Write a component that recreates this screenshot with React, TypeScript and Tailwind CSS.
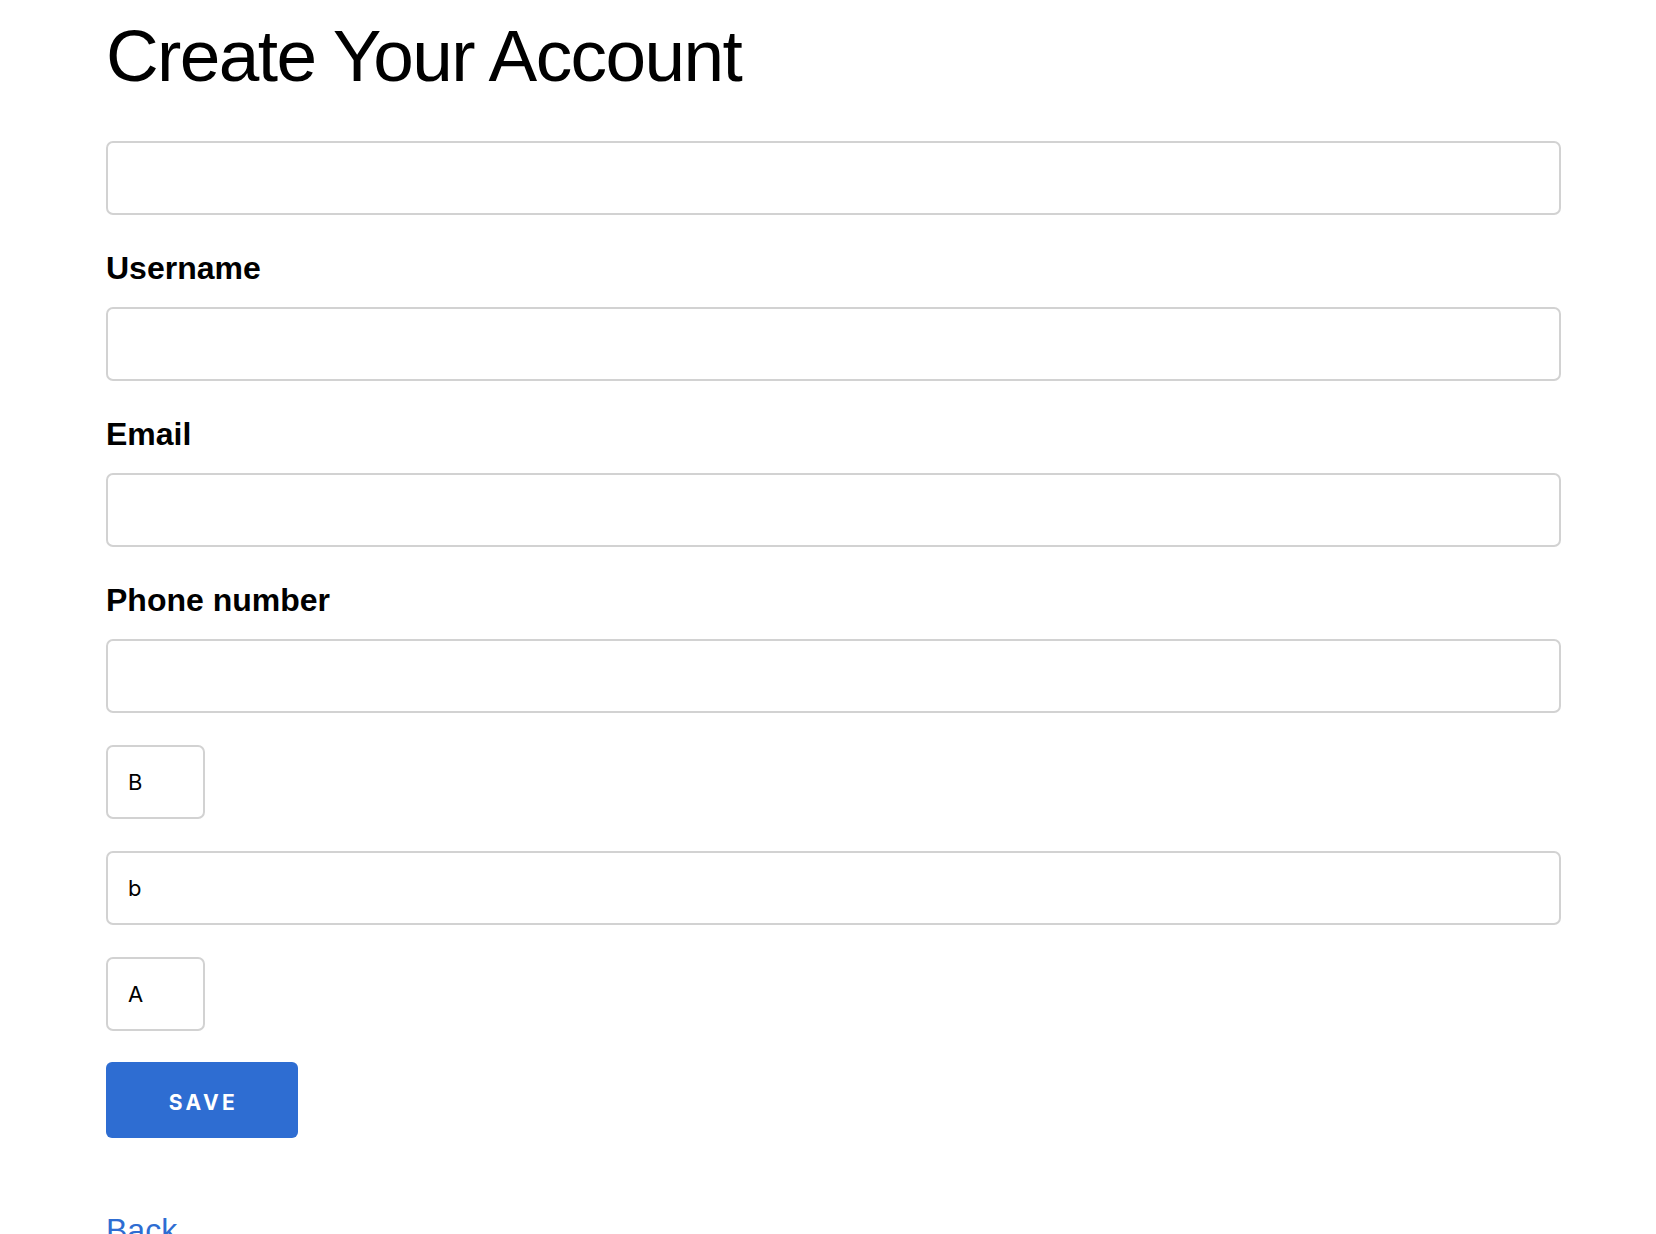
const inputBase =
  "h-[74px] rounded-[7px] border-2 border-[#d2d2d2] bg-white pl-[20px] text-[22px] text-black outline-none font-['Inter',sans-serif]";

function Field({ label, first }: { label?: string; first?: boolean }) {
  return (
    <div className={first ? "mt-[49px]" : ""}>
      {label && (
        <label className="mt-[33px] mb-[19px] block text-[32px] leading-[40px] font-bold text-black">
          {label}
        </label>
      )}
      <input type="text" className={`${inputBase} w-full`} />
    </div>
  );
}

export default function App() {
  return (
    <div className="min-h-screen bg-white font-['Liberation_Sans',Arial,sans-serif]">
      <div className="ml-[106px] w-[1455px] pt-[19px]">
        <h1 className="text-[73px] leading-none font-normal tracking-[-1.6px] text-black">
          Create Your Account
        </h1>

        <form onSubmit={(e) => e.preventDefault()}>
          <Field first />
          <Field label="Username" />
          <Field label="Email" />
          <Field label="Phone number" />

          <div className="mt-[32px] flex flex-col gap-[32px]">
            <input type="text" defaultValue="B" className={`${inputBase} w-[99px]`} />
            <input type="text" defaultValue="b" className={`${inputBase} w-full`} />
            <input type="text" defaultValue="A" className={`${inputBase} w-[99px]`} />
          </div>

          <button
            type="submit"
            className="mt-[31px] h-[76px] w-[192px] rounded-[6px] bg-[#2e6dd2] pt-[6px] pl-[3px] text-[21px] font-bold tracking-[3.4px] text-white font-['Inter',sans-serif]"
          >
            SAVE
          </button>
        </form>

        <a href="#" className="mt-[72px] block text-[32px] leading-[40px] text-[#2e6dd2]">
          Back
        </a>
      </div>
    </div>
  );
}
